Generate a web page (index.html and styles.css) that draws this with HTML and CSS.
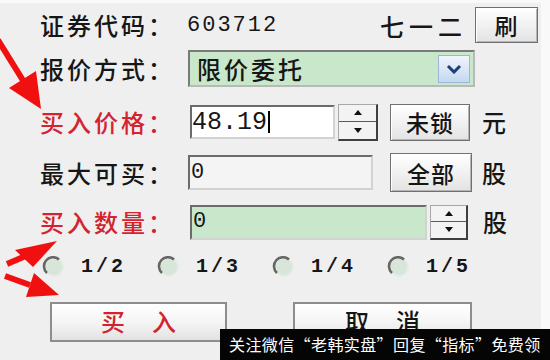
FILE: index.html
```html
<!DOCTYPE html>
<html lang="zh-CN">
<head>
<meta charset="utf-8">
<title>买入</title>
<link rel="stylesheet" href="styles.css">
</head>
<body>
<div class="panel">
  <div class="row r1">
    <span class="label">证券代码：</span>
    <span class="code">603712</span>
    <span class="name">七一二</span>
    <button class="btn btn-refresh">刷</button>
  </div>
  <div class="row r2">
    <span class="label">报价方式：</span>
    <div class="select">
      <span class="select-text">限价委托</span>
      <span class="drop"><svg width="16" height="10" viewBox="0 0 16 10"><path d="M2 2 L8 8 L14 2" fill="none" stroke="#1d3e78" stroke-width="3"/></svg></span>
    </div>
  </div>
  <div class="row r3">
    <span class="label red">买入价格：</span>
    <div class="field price"><span class="num">48.19</span><span class="caret"></span></div>
    <div class="spin spin3">
      <span class="half"><svg width="8" height="5" viewBox="0 0 8 5"><path d="M0 5 L4 0 L8 5 Z" fill="#111"/></svg></span>
      <span class="half"><svg width="8" height="5" viewBox="0 0 8 5"><path d="M0 0 L4 5 L8 0 Z" fill="#111"/></svg></span>
    </div>
    <button class="btn btn-lock">未锁</button>
    <span class="unit unit3">元</span>
  </div>
  <div class="row r4">
    <span class="label">最大可买：</span>
    <div class="field maxbuy"><span class="num small">0</span></div>
    <button class="btn btn-all">全部</button>
    <span class="unit unit4">股</span>
  </div>
  <div class="row r5">
    <span class="label red">买入数量：</span>
    <div class="field qty"><span class="num small">0</span></div>
    <div class="spin spin5">
      <span class="half"><svg width="8" height="5" viewBox="0 0 8 5"><path d="M0 5 L4 0 L8 5 Z" fill="#111"/></svg></span>
      <span class="half"><svg width="8" height="5" viewBox="0 0 8 5"><path d="M0 0 L4 5 L8 0 Z" fill="#111"/></svg></span>
    </div>
    <span class="unit unit5">股</span>
  </div>
  <div class="row r6">
    <label class="opt"><svg class="radio" width="24" height="22" viewBox="0 0 24 22"><circle cx="12" cy="11" r="9" fill="#d7e6d8" stroke="#e4ece4" stroke-width="2"/><path d="M17 3.5 A9 9 0 0 0 5 17" fill="none" stroke="#666" stroke-width="2.6"/></svg><span class="frac">1/2</span></label>
    <label class="opt"><svg class="radio" width="24" height="22" viewBox="0 0 24 22"><circle cx="12" cy="11" r="9" fill="#d7e6d8" stroke="#e4ece4" stroke-width="2"/><path d="M17 3.5 A9 9 0 0 0 5 17" fill="none" stroke="#666" stroke-width="2.6"/></svg><span class="frac">1/3</span></label>
    <label class="opt"><svg class="radio" width="24" height="22" viewBox="0 0 24 22"><circle cx="12" cy="11" r="9" fill="#d7e6d8" stroke="#e4ece4" stroke-width="2"/><path d="M17 3.5 A9 9 0 0 0 5 17" fill="none" stroke="#666" stroke-width="2.6"/></svg><span class="frac">1/4</span></label>
    <label class="opt"><svg class="radio" width="24" height="22" viewBox="0 0 24 22"><circle cx="12" cy="11" r="9" fill="#d7e6d8" stroke="#e4ece4" stroke-width="2"/><path d="M17 3.5 A9 9 0 0 0 5 17" fill="none" stroke="#666" stroke-width="2.6"/></svg><span class="frac">1/5</span></label>
  </div>
  <div class="row r7">
    <button class="big buy"><span>买</span> <span>入</span></button>
    <button class="big cancel"><span>取</span> <span>消</span></button>
  </div>
</div>
<svg class="arrows" width="550" height="360" viewBox="0 0 550 360">
  <line x1="-2" y1="40" x2="24" y2="82" stroke="#f01010" stroke-width="6"/>
  <polygon points="41,109 9,88 36,71" fill="#f01010"/>
  <line x1="7" y1="264" x2="28" y2="255" stroke="#f01010" stroke-width="6"/>
  <polygon points="57,241 15,250 33,267" fill="#f01010"/>
  <line x1="5" y1="276" x2="30" y2="285" stroke="#f01010" stroke-width="6"/>
  <polygon points="59,295 26,297 34,273" fill="#f01010"/>
</svg>
<div class="banner">关注微信“老韩实盘”回复“指标”免费领</div>
</body>
</html>
```
FILE: styles.css
```css
* { box-sizing: border-box; }
html, body { margin: 0; padding: 0; }
body {
  width: 550px;
  height: 360px;
  background: #f9f9f9;
  font-family: "Noto Sans CJK SC", sans-serif;
  overflow: hidden;
  position: relative;
  color: #161616;
}
.panel {
  width: 541px;
  height: 357px;
  margin-top: 3px;
  background: #efefef;
  padding: 4px 0 0 40px;
}
.row { display: flex; align-items: center; }
.r1 { height: 36px; width: 498px; }
.r2 { height: 37px; margin-top: 7px; }
.r3 { height: 38px; margin-top: 16px; }
.r4 { height: 39px; margin-top: 12px; }
.r5 { height: 36px; margin-top: 12px; }
.r6 { height: 21px; margin-top: 16px; }
.r7 { height: 40px; margin-top: 25px; }

.label {
  flex: none;
  width: 147px;
  font-size: 24px;
  font-weight: 500;
  letter-spacing: 3px;
  line-height: 1;
  white-space: nowrap;
}
.red { color: #d2232e; }

.code {
  font-family: "Liberation Mono", monospace;
  font-size: 22px;
  letter-spacing: 2px;
}
.name {
  margin-left: auto;
  margin-right: 8px;
  font-size: 24px;
  font-weight: 500;
  letter-spacing: 5px;
}

.btn {
  display: flex;
  align-items: center;
  justify-content: center;
  padding: 0;
  border: 1px solid #707070;
  background: linear-gradient(#ffffff, #e3e3e3);
  box-shadow: inset 1px 1px 0 #ffffff, inset -1px -1px 0 #b5b5b5;
  font-family: "Noto Sans CJK SC", sans-serif;
  font-size: 23px;
  font-weight: 500;
  color: #151515;
  letter-spacing: 1px;
}
.btn-refresh { width: 63px; height: 36px; }

.select {
  display: flex;
  align-items: center;
  width: 287px;
  height: 37px;
  margin-left: 1px;
  padding-left: 7px;
  background: #c9e7cb;
  border: 2px solid;
  border-color: #7a7a7a #b9b9b9 #b9b9b9 #7a7a7a;
  font-size: 24px;
  font-weight: 500;
  letter-spacing: 3px;
}
.drop {
  display: flex;
  align-items: center;
  justify-content: center;
  width: 32px;
  height: 28px;
  margin-left: auto;
  margin-right: 3px;
  background: linear-gradient(#f0f5fc, #c4d8f1);
  border: 1px solid #9cb6d8;
}

.field {
  display: flex;
  align-items: center;
  border: 2px solid;
  border-color: #6b6b6b #d2d2d2 #d2d2d2 #6b6b6b;
}
.num {
  font-family: "Liberation Mono", monospace;
  font-size: 25px;
  line-height: 1;
}
.num.small { font-size: 22px; padding-left: 1px; }
.caret { width: 2px; height: 22px; background: #000; margin-left: 1px; }
.price { width: 145px; height: 34px; margin-left: 3px; background: #ffffff; }
.maxbuy { width: 185px; height: 35px; margin-left: 1px; background: #f4f4f4; }
.qty { width: 237px; height: 35px; margin-left: 3px; background: #c9e7cb; }

.spin {
  display: flex;
  flex-direction: column;
  background: #f3f3f3;
  border: 1px solid #a8a8a8;
  border-right: 2px solid #3f3f3f;
  border-bottom: 2px solid #3f3f3f;
}
.half { flex: 1; display: flex; align-items: center; justify-content: center; }
.half + .half { border-top: 1px solid #5a5a5a; }
.spin3 { width: 40px; height: 37px; margin-left: 3px; }
.spin5 { width: 38px; height: 35px; margin-left: 3px; }

.btn-lock { width: 80px; height: 37px; margin-left: 12px; }
.btn-all { width: 82px; height: 39px; margin-left: 17px; }
.unit { font-size: 24px; font-weight: 500; line-height: 1; }
.unit3 { margin-left: 12px; }
.unit4 { margin-left: 10px; }
.unit5 { margin-left: 15px; }

.opt { display: flex; align-items: center; width: 115px; flex: none; }
.opt:first-child { margin-left: 2px; }
.radio { flex: none; }
.frac {
  margin-left: 15px;
  font-family: "Liberation Mono", monospace;
  font-size: 20px;
  font-weight: bold;
  letter-spacing: 3px;
  line-height: 1;
}

.big {
  display: flex;
  align-items: center;
  justify-content: center;
  gap: 27px;
  height: 40px;
  padding: 0 0 4px;
  border: 2px solid #8d8d8d;
  background: linear-gradient(#ffffff 0%, #f5f5f5 50%, #e2e2e2 100%);
  font-family: "Noto Sans CJK SC", sans-serif;
  font-size: 24px;
  font-weight: 500;
}
.buy { width: 177px; margin-left: 10px; color: #d2232e; }
.cancel { width: 179px; margin-left: 66px; color: #151515; }

.arrows { position: absolute; top: 0; left: 0; pointer-events: none; }

.banner {
  position: absolute;
  left: 220px;
  top: 329px;
  width: 330px;
  height: 31px;
  padding-left: 9px;
  background: #050505;
  color: #ffffff;
  font-size: 16px;
  letter-spacing: 0.4px;
  line-height: 31px;
  white-space: nowrap;
}
```
